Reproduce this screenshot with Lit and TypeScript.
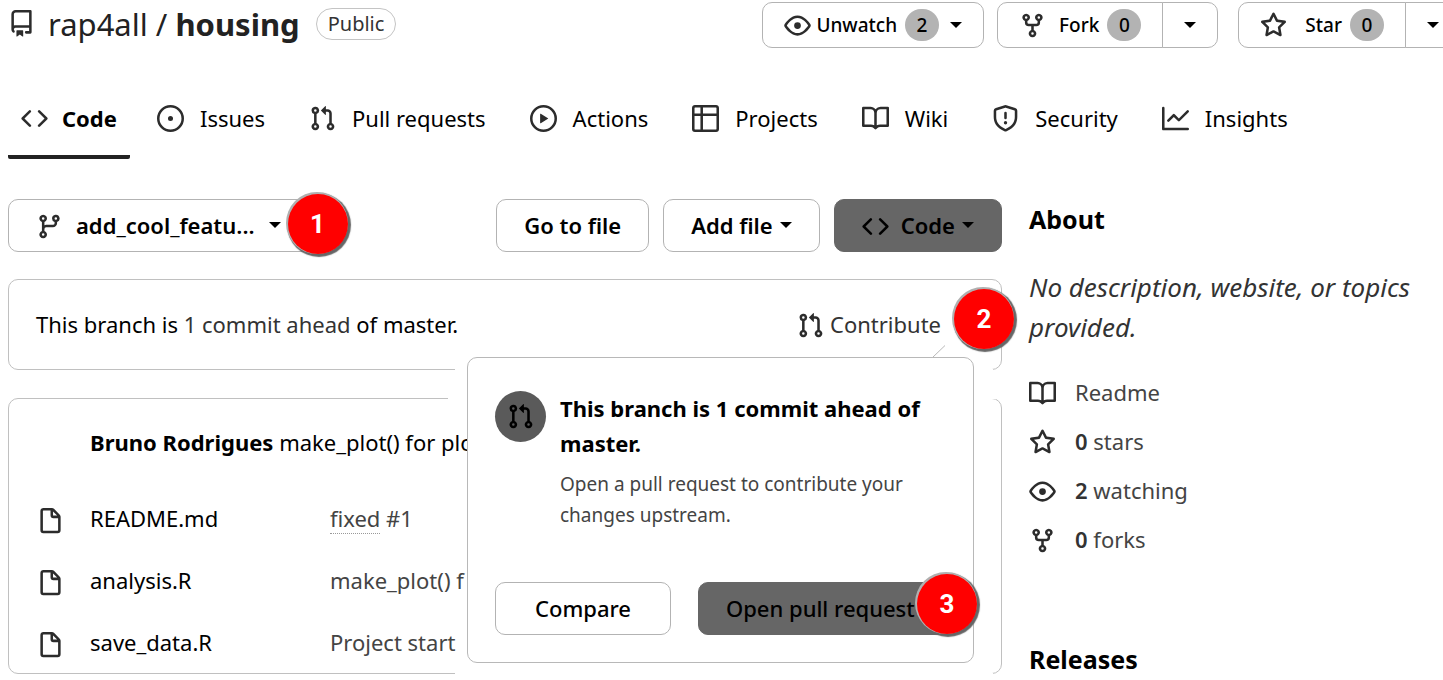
import { LitElement, html, css, svg, nothing } from "lit";
import { customElement, property } from "lit/decorators.js";

const ICONS: Record<string, string> = {
  repo: "M2 2.5A2.5 2.5 0 014.5 0h8.75a.75.75 0 01.75.75v12.5a.75.75 0 01-.75.75h-2.5a.75.75 0 110-1.5h1.75v-2h-8a1 1 0 00-.714 1.7.75.75 0 01-1.072 1.05A2.495 2.495 0 012 11.5v-9zm10.5-1V9h-8c-.356 0-.694.074-1 .208V2.5a1 1 0 011-1h8zM5 12.25v3.25a.25.25 0 00.4.2l1.45-1.087a.25.25 0 01.3 0L8.6 15.7a.25.25 0 00.4-.2v-3.25a.25.25 0 00-.25-.25h-3.5a.25.25 0 00-.25.25z",
  code: "M4.72 3.22a.75.75 0 011.06 1.06L2.06 8l3.72 3.72a.75.75 0 11-1.06 1.06L.47 8.53a.75.75 0 010-1.06l4.25-4.25zm6.56 0a.75.75 0 10-1.06 1.06L13.94 8l-3.72 3.72a.75.75 0 101.06 1.06l4.25-4.25a.75.75 0 000-1.06l-4.25-4.25z",
  issue: "M8 9.5a1.5 1.5 0 100-3 1.5 1.5 0 000 3zM8 0a8 8 0 100 16A8 8 0 008 0zM1.5 8a6.5 6.5 0 1113 0 6.5 6.5 0 01-13 0z",
  pull: "M7.177 3.073L9.573.677A.25.25 0 0110 .854v4.792a.25.25 0 01-.427.177L7.177 3.427a.25.25 0 010-.354zM3.75 2.5a.75.75 0 100 1.5.75.75 0 000-1.5zm-2.25.75a2.25 2.25 0 113 2.122v5.256a2.251 2.251 0 11-1.5 0V5.372A2.25 2.25 0 011.5 3.25zM11 2.5h-1V4h1a1 1 0 011 1v5.628a2.251 2.251 0 101.5 0V5A2.5 2.5 0 0011 2.5zm1 10.25a.75.75 0 111.5 0 .75.75 0 01-1.5 0zM3.75 12a.75.75 0 100 1.5.75.75 0 000-1.5z",
  play: "M1.5 8a6.5 6.5 0 1113 0 6.5 6.5 0 01-13 0zM8 0a8 8 0 100 16A8 8 0 008 0zM6.379 5.227A.25.25 0 006 5.442v5.117a.25.25 0 00.379.214l4.264-2.559a.25.25 0 000-.428L6.379 5.227z",
  table: "M0 1.75C0 .784.784 0 1.75 0h12.5C15.216 0 16 .784 16 1.75v12.5A1.75 1.75 0 0 1 14.25 16H1.75A1.75 1.75 0 0 1 0 14.25ZM6.5 6.5v8h7.75a.25.25 0 0 0 .25-.25V6.5Zm8-1.5V1.75a.25.25 0 0 0-.25-.25H6.5V5Zm-13 1.5v7.75c0 .138.112.25.25.25H5v-8ZM5 5V1.5H1.75a.25.25 0 0 0-.25.25V5Z",
  book: "M0 1.75A.75.75 0 01.75 1h4.253c1.227 0 2.317.59 3 1.501A3.744 3.744 0 0111.006 1h4.245a.75.75 0 01.75.75v10.5a.75.75 0 01-.75.75h-4.507a2.25 2.25 0 00-1.591.659l-.622.621a.75.75 0 01-1.06 0l-.622-.621A2.25 2.25 0 005.258 13H.75a.75.75 0 01-.75-.75V1.75zm8.755 3a2.25 2.25 0 012.25-2.25H14.5v9h-3.757c-.71 0-1.4.201-1.992.572l.004-7.322zm-1.504 7.324l.004-5.073-.002-2.253A2.25 2.25 0 005.003 2.5H1.5v9h3.757a3.75 3.75 0 011.994.574z",
  shield: "M7.467.133a1.75 1.75 0 011.066 0l5.25 1.68A1.75 1.75 0 0115 3.48V7c0 1.566-.32 3.182-1.303 4.682-.983 1.498-2.585 2.813-5.032 3.855a1.7 1.7 0 01-1.33 0c-2.447-1.042-4.049-2.357-5.032-3.855C1.32 10.182 1 8.566 1 7V3.48a1.75 1.75 0 011.217-1.667l5.25-1.68zm.61 1.429a.25.25 0 00-.153 0l-5.25 1.68a.25.25 0 00-.174.238V7c0 1.358.275 2.666 1.057 3.86.784 1.194 2.121 2.34 4.366 3.297a.2.2 0 00.154 0c2.245-.956 3.582-2.104 4.366-3.298C13.225 9.666 13.5 8.36 13.5 7V3.48a.25.25 0 00-.174-.237l-5.25-1.68zM9 10.5a1 1 0 11-2 0 1 1 0 012 0zm-.25-5.75a.75.75 0 10-1.5 0v3a.75.75 0 001.5 0v-3z",
  graph: "M1.5 1.75a.75.75 0 00-1.5 0v12.5c0 .414.336.75.75.75h14.5a.75.75 0 000-1.5H1.5V1.75zm14.28 2.53a.75.75 0 00-1.06-1.06L10 7.94 7.53 5.47a.75.75 0 00-1.06 0L3.22 8.72a.75.75 0 001.06 1.06L7 7.06l2.47 2.47a.75.75 0 001.06 0l5.25-5.25z",
  eye: "M1.679 7.932c.412-.621 1.242-1.75 2.366-2.717C5.175 4.242 6.527 3.5 8 3.5c1.473 0 2.824.742 3.955 1.715 1.124.967 1.954 2.096 2.366 2.717a.119.119 0 010 .136c-.412.621-1.242 1.75-2.366 2.717C10.825 11.758 9.473 12.5 8 12.5c-1.473 0-2.824-.742-3.955-1.715C2.92 9.818 2.09 8.69 1.679 8.068a.119.119 0 010-.136zM8 2c-1.981 0-3.67.992-4.933 2.078C1.797 5.169.88 6.423.43 7.1a1.619 1.619 0 000 1.798c.45.678 1.367 1.932 2.637 3.024C4.329 13.008 6.019 14 8 14c1.981 0 3.67-.992 4.933-2.078 1.27-1.091 2.187-2.345 2.637-3.023a1.619 1.619 0 000-1.798c-.45-.678-1.367-1.932-2.637-3.023C11.671 2.992 9.981 2 8 2zm0 8a2 2 0 100-4 2 2 0 000 4z",
  fork: "M5 3.25a.75.75 0 11-1.5 0 .75.75 0 011.5 0zm0 2.122a2.25 2.25 0 10-1.5 0v.878A2.25 2.25 0 005.75 8.5h1.5v2.128a2.251 2.251 0 101.5 0V8.5h1.5a2.25 2.25 0 002.25-2.25v-.878a2.25 2.25 0 10-1.5 0v.878a.75.75 0 01-.75.75h-4.5A.75.75 0 015 6.25v-.878zm3.75 7.378a.75.75 0 11-1.5 0 .75.75 0 011.5 0zm3-8.75a.75.75 0 100-1.5.75.75 0 000 1.5z",
  star: "M8 .25a.75.75 0 01.673.418l1.882 3.815 4.21.612a.75.75 0 01.416 1.279l-3.046 2.97.719 4.192a.75.75 0 01-1.088.791L8 12.347l-3.766 1.98a.75.75 0 01-1.088-.79l.72-4.194L.818 6.374a.75.75 0 01.416-1.28l4.21-.611L7.327.668A.75.75 0 018 .25zm0 2.445L6.615 5.5a.75.75 0 01-.564.41l-3.097.45 2.24 2.184a.75.75 0 01.216.664l-.528 3.084 2.769-1.456a.75.75 0 01.698 0l2.77 1.456-.53-3.084a.75.75 0 01.216-.664l2.24-2.183-3.096-.45a.75.75 0 01-.564-.41L8 2.694v.001z",
  branch: "M11.75 2.5a.75.75 0 100 1.5.75.75 0 000-1.5zm-2.25.75a2.25 2.25 0 113 2.122V6A2.5 2.5 0 0110 8.5H6a1 1 0 00-1 1v1.128a2.251 2.251 0 11-1.5 0V5.372a2.25 2.25 0 111.5 0v1.836A2.492 2.492 0 016 7h4a1 1 0 001-1v-.628A2.25 2.25 0 019.5 3.25zM4.25 12a.75.75 0 100 1.5.75.75 0 000-1.5zM3.5 3.25a.75.75 0 111.5 0 .75.75 0 01-1.5 0z",
  file: "M3.75 1.5a.25.25 0 00-.25.25v11.5c0 .138.112.25.25.25h8.5a.25.25 0 00.25-.25V6H9.75A1.75 1.75 0 018 4.25V1.5H3.75zm5.75.56v2.19c0 .138.112.25.25.25h2.19L9.5 2.06zM2 1.75C2 .784 2.784 0 3.75 0h5.086c.464 0 .909.184 1.237.513l3.414 3.414c.329.328.513.773.513 1.237v8.086A1.75 1.75 0 0112.25 15h-8.5A1.75 1.75 0 012 13.25V1.75z",
};

@customElement("oct-icon")
class OctIcon extends LitElement {
  @property() name = "code";
  static styles = css`
    :host { display: block; flex: none; width: 27px; height: 27px; }
    svg { display: block; width: 100%; height: 100%; fill: currentColor; }
  `;
  render() {
    return html`<svg viewBox="0 0 16 16" aria-hidden="true">${svg`<path fill-rule="evenodd" d=${ICONS[this.name]}></path>`}</svg>`;
  }
}

const TABS = [
  ["code", "Code"],
  ["issue", "Issues"],
  ["pull", "Pull requests"],
  ["play", "Actions"],
  ["table", "Projects"],
  ["book", "Wiki"],
  ["shield", "Security"],
  ["graph", "Insights"],
];

const FILES = [
  { name: "README.md", issue: "fixed", message: " #1" },
  { name: "analysis.R", message: "make_plot() f" },
  { name: "save_data.R", message: "Project start" },
];

const STATS = [
  { icon: "book", label: "Readme" },
  { icon: "star", count: "0", label: "stars" },
  { icon: "eye", count: "2", label: "watching" },
  { icon: "fork", count: "0", label: "forks" },
];

@customElement("app-root")
class AppRoot extends LitElement {
  static styles = css`
    :host {
      display: block;
      overflow: hidden;
      min-height: 100vh;
      background: #fff;
      color: #000;
      font: 22px/32px "Noto Sans", sans-serif;
    }
    * { box-sizing: border-box; }
    a { color: inherit; text-decoration: none; }
    h1, h2, h3, p, ul { margin: 0; padding: 0; font-weight: 400; }
    ul { list-style: none; }
    oct-icon { color: #2c2c2c; }
    .bar oct-icon, .contribute oct-icon, .side oct-icon { margin-top: 4px; }
    button {
      display: flex;
      align-items: center;
      justify-content: center;
      height: 53px;
      padding: 0 27px 2px;
      border: 1px solid #b3b3b3;
      border-radius: 10px;
      background: #fff;
      color: #000;
      font: 600 22px/32px "Noto Sans", sans-serif;
      white-space: nowrap;
    }
    .caret {
      flex: none;
      border: 6px solid transparent;
      border-top-color: currentColor;
      border-bottom-width: 0;
    }
    .dark { background: #666; border-color: #666; }
    .dark oct-icon { color: #000; }

    .head {
      display: flex;
      align-items: center;
      justify-content: space-between;
      height: 48px;
      padding: 2px 0 0 8px;
    }
    .title { display: flex; align-items: center; padding-bottom: 3px; color: #222; }
    .title h1 {
      margin: 0 16px 0 13px;
      font-size: 31px;
      line-height: 42px;
      white-space: nowrap;
    }
    .title b { font-weight: 700; }
    .pill {
      padding: 0 11px;
      border: 1px solid #c4c4c4;
      border-radius: 16px;
      font-size: 20px;
      line-height: 30px;
      color: #333;
    }
    .actions { display: flex; margin-right: -18px; }
    .actions button { height: 46px; font-size: 19px; font-weight: 500; }
    .group { display: flex; margin-left: 20px; }
    .group.near { margin-left: 13px; }
    .group button { padding: 0 21px; }
    .group button:not(:last-child) { border-radius: 10px 0 0 10px; }
    .group button + button { width: 56px; padding: 0; margin-left: -1px; border-radius: 0 10px 10px 0; }
    .group .label { margin: 0 8px 0 18px; }
    .near .label { margin-left: 13px; }
    .watch .label { margin-left: 5px; }
    .watch .caret { margin-left: 11px; }
    .count {
      width: 34px;
      border-radius: 16px;
      background: #b3b3b3;
      text-align: center;
    }

    .tabs { display: flex; gap: 14px; padding: 31px 8px 0; }
    .tab {
      display: flex;
      align-items: center;
      gap: 16px;
      height: 80px;
      padding: 2px 17px 0 13px;
      border-bottom: 4px solid transparent;
      white-space: nowrap;
    }
    .tab.on {
      gap: 14px;
      padding-right: 13px;
      border-bottom-color: #222;
      border-radius: 2px;
      font-weight: 700;
    }

    .page {
      display: grid;
      grid-template-columns: minmax(0, 1fr) 406px;
      gap: 27px;
      padding: 40px 8px 0;
    }
    .bar { display: flex; gap: 14px; }
    .picker { position: relative; margin-right: auto; }
    .picker button { padding: 0 36px 2px 27px; }
    .picker .label { margin: 0 14px 0 13px; }
    .bar .caret { margin-left: 7px; }
    .picker .caret { margin: 0; }
    .bar .dark oct-icon { margin-right: 12px; }

    .box { position: relative; border: 1px solid #c0c0c0; border-radius: 10px; }
    .ahead {
      display: flex;
      align-items: center;
      justify-content: space-between;
      height: 91px;
      margin: 27px 0 28px;
      padding: 0 60px 2px 27px;
    }
    .ahead a { color: #333; }
    .contribute { display: flex; align-items: center; gap: 6px; }
    /* The open menu interrupts the card outlines beside it. */
    .ahead::after, .files::before, .files::after {
      content: "";
      position: absolute;
      right: 8px;
      width: 538px;
      height: 1px;
      background: #fff;
    }
    .ahead::after { bottom: -1px; }
    .files::before { top: -1px; right: 4px; width: 549px; }
    .files::after { bottom: -1px; }

    .menu {
      position: absolute;
      z-index: 2;
      top: 77px;
      right: 27px;
      width: 507px;
      padding: 33px 26px 27px 27px;
      border: 1px solid #b8b8b8;
      border-radius: 10px;
      background: #fff;
    }
    .notch {
      position: absolute;
      top: -13px;
      right: 16px;
      width: 28px;
      height: 13px;
      fill: #fff;
      stroke: #b8b8b8;
    }
    .note { display: flex; gap: 14px; }
    .disc {
      display: grid;
      place-items: center;
      flex: none;
      width: 51px;
      height: 51px;
      border-radius: 50%;
      background: #5a5a5a;
    }
    .disc oct-icon { color: #000; }
    .note h3 { font-weight: 700; font-size: 22px; line-height: 35px; }
    .note p { margin-top: 8px; font-size: 19px; line-height: 31px; color: #444; }
    .choices { display: flex; gap: 27px; margin-top: 51px; }
    .choices button { font-weight: 500; }
    .choices button:first-child { padding: 0 39px 2px; }
    .choices button:last-child { flex: 1; justify-content: flex-start; }

    table { width: 100%; border-collapse: collapse; table-layout: fixed; }
    th, td { height: 62px; padding: 0; text-align: left; font-weight: 400; white-space: nowrap; }
    thead th { height: 88px; padding-bottom: 2px; }
    thead b { font-weight: 700; }
    .c-icon { width: 81px; }
    .c-name { width: 240px; }
    td oct-icon { margin: 6px 0 0 28px; }
    .msg { color: #444; }
    .msg a { border-bottom: 1px dotted #999; }

    .pin {
      position: absolute;
      z-index: 3;
      display: grid;
      place-items: center;
      width: 60px;
      height: 60px;
      border-radius: 50%;
      background: #f00;
      box-shadow: -1px -1px 0 1px #b0b0b0, 1px 1px 1px 2px #666;
      color: #fff;
      font: 700 26px/30px Roboto, sans-serif;
    }
    .pin-1 { top: -5px; right: -30px; }
    .pin-2 { top: 9px; right: -13px; }
    .pin-3 { bottom: 28px; right: -4px; }

    .side h2 { font-weight: 700; font-size: 25px; line-height: 40px; }
    .side p { margin: 28px 0 20px; font-size: 26px; line-height: 40px; font-style: italic; color: #333; }
    .side li { display: flex; align-items: center; gap: 19px; height: 49px; color: #444; }
    .side li b { font-weight: 600; color: #333; }
    .side ul { margin-bottom: 76px; }
  `;

  render() {
    return html`
      <header class="head">
        <div class="title">
          <oct-icon name="repo"></oct-icon>
          <h1><a href="#">rap4all</a> / <a href="#"><b>housing</b></a></h1>
          <span class="pill">Public</span>
        </div>
        <div class="actions">
          <div class="group watch">
            <button><oct-icon name="eye"></oct-icon><span class="label">Unwatch</span><span class="count">2</span><span class="caret"></span></button>
          </div>
          <div class="group near">
            <button><oct-icon name="fork"></oct-icon><span class="label">Fork</span><span class="count">0</span></button>
            <button aria-label="Fork options"><span class="caret"></span></button>
          </div>
          <div class="group">
            <button><oct-icon name="star"></oct-icon><span class="label">Star</span><span class="count">0</span></button>
            <button aria-label="Star lists"><span class="caret"></span></button>
          </div>
        </div>
      </header>

      <nav class="tabs">
        ${TABS.map(([icon, label], i) => html`<a class="tab ${i === 0 ? "on" : ""}" href="#"><oct-icon name=${icon}></oct-icon>${label}</a>`)}
      </nav>

      <div class="page">
        <main>
          <div class="bar">
            <div class="picker">
              <button><oct-icon name="branch"></oct-icon><span class="label">add_cool_featu...</span><span class="caret"></span></button>
              <span class="pin pin-1">1</span>
            </div>
            <button>Go to file</button>
            <button>Add file<span class="caret"></span></button>
            <button class="dark"><oct-icon name="code"></oct-icon>Code<span class="caret"></span></button>
          </div>

          <section class="box ahead">
            <span>This branch is <a href="#">1 commit ahead</a> of master.</span>
            <a class="contribute" href="#"><oct-icon name="pull"></oct-icon>Contribute</a>
            <span class="pin pin-2">2</span>
            <div class="menu">
              <svg class="notch" viewBox="0 0 28 13" aria-hidden="true"><path d="M16 .5L3.5 12.5H28"></path></svg>
              <div class="note">
                <span class="disc"><oct-icon name="pull"></oct-icon></span>
                <div>
                  <h3>This branch is 1 commit ahead of master.</h3>
                  <p>Open a pull request to contribute your changes upstream.</p>
                </div>
              </div>
              <div class="choices">
                <button>Compare</button>
                <button class="dark">Open pull request</button>
              </div>
              <span class="pin pin-3">3</span>
            </div>
          </section>

          <section class="box files">
            <table>
              <colgroup><col class="c-icon" /><col class="c-name" /><col /></colgroup>
              <thead>
                <tr><th></th><th colspan="2"><b>Bruno Rodrigues</b> make_plot() for plo</th></tr>
              </thead>
              <tbody>
                ${FILES.map((f) => html`<tr>
                  <td><oct-icon name="file"></oct-icon></td>
                  <td><a href="#">${f.name}</a></td>
                  <td class="msg">${f.issue ? html`<a href="#">${f.issue}</a>` : nothing}${f.message}</td>
                </tr>`)}
              </tbody>
            </table>
          </section>
        </main>

        <aside class="side">
          <h2>About</h2>
          <p>No description, website, or topics provided.</p>
          <ul>
            ${STATS.map((s) => html`<li><oct-icon name=${s.icon}></oct-icon><span>${s.count ? html`<b>${s.count}</b> ` : nothing}${s.label}</span></li>`)}
          </ul>
          <h2>Releases</h2>
        </aside>
      </div>
    `;
  }
}
